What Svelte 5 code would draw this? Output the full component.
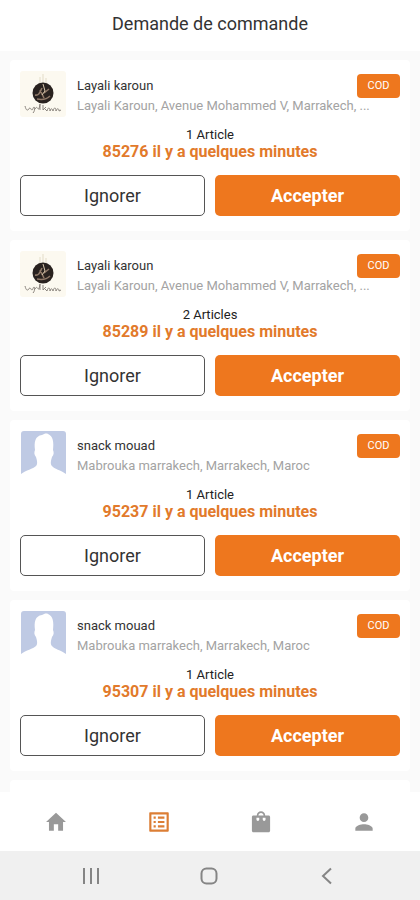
<script>
  const orders = [
    { id: 85276, shop: 'Layali karoun', address: 'Layali Karoun, Avenue Mohammed V, Marrakech, ...', count: 1, logo: true },
    { id: 85289, shop: 'Layali karoun', address: 'Layali Karoun, Avenue Mohammed V, Marrakech, ...', count: 2, logo: true },
    { id: 95237, shop: 'snack mouad', address: 'Mabrouka marrakech, Marrakech, Maroc', count: 1, logo: false },
    { id: 95307, shop: 'snack mouad', address: 'Mabrouka marrakech, Marrakech, Maroc', count: 1, logo: false }
  ]

  // material icons, 24x24
  const tabs = [
    { name: 'home', label: 'Accueil', path: 'M10 20v-6h4v6h4.500v-8h2.700L12 3.500 2.800 12h2.700v8z' },
    { name: 'orders', label: 'Commandes', path: 'M19 5v14H5V5h14m1.100-2H3.900c-.5 0-.9.4-.9.9v16.200c0 .4.4.9.9.9h16.200c.4 0 .9-.5.9-.9V3.900c0-.5-.5-.9-.9-.9zM11 7h6v2h-6V7zm0 4h6v2h-6v-2zm0 4h6v2h-6zM7 7h2v2H7zm0 4h2v2H7zm0 4h2v2H7z' },
    { name: 'products', label: 'Produits', path: 'M19 6h-3.100a3.900 3.900 0 0 0-7.800 0H5c-.8 0-1.400.6-1.400 1.400v12.700c0 .8.6 1.400 1.400 1.400h14c.8 0 1.400-.6 1.400-1.400V7.400c0-.8-.6-1.400-1.400-1.400zM12 3.600c1.300 0 2.300 1 2.400 2.400H9.600c.1-1.400 1.100-2.400 2.400-2.400zM9.100 11a1.300 1.300 0 0 1-1.300-1.300V8h2.600v1.700c0 .7-.6 1.300-1.300 1.300zm5.800 0a1.300 1.300 0 0 1-1.300-1.300V8h2.600v1.700c0 .7-.6 1.300-1.300 1.300z' },
    { name: 'profile', label: 'Profil', path: 'M12 12c2.210 0 4-1.790 4-4s-1.790-4-4-4-4 1.790-4 4 1.790 4 4 4zm0 2c-2.670 0-8 1.340-8 4v2h16v-2c0-2.660-5.330-4-8-4z' }
  ]

  let active = $state('orders')
</script>

<div class="app">
  <header>
    <h1>Demande de commande</h1>
  </header>

  <main>
    {#each orders as order (order.id)}
      <article class="card">
        <div class="shop">
          {#if order.logo}
            <svg class="avatar" viewBox="0 0 46 46" aria-hidden="true">
              <rect width="46" height="46" rx="3" fill="#fcf9f0" />
              <path d="M20 12V6M23 12V3M26 12V7" stroke="#e3dcc8" stroke-width="1" />
              <circle cx="23" cy="22" r="10.500" fill="#29221f" />
              <path d="M15 24c4 1 5-3 7-7M17 28c5 1 10 0 13-3M24 22l5-4M20 19l4 8" fill="none" stroke="#8f7867" stroke-width="1.600" />
              <path d="M23 13l2 7-3 4" fill="none" stroke="#d9c8ad" stroke-width="1" />
              <path d="M5 35c1 4 2 5 4 3 1-3 2 1 3 1s1-3 2-3 1 4-1 6M15 38c2-4 3 1 4 0l1-5v6M23 34v5l3-3M24 37l3 3c1-4 3-4 3 0 1-3 2-3 3 0 1-4 3-4 3 0 1-3 3-3 3 0l2-1" fill="none" stroke="#8b857e" stroke-width="1" />
            </svg>
          {:else}
            <svg class="avatar" viewBox="0 0 46 46" aria-hidden="true">
              <path d="M3 0h40q3 0 3 3v40c-5-4-12-5-14-8-2-2-1-6 0-9 2-2 2-5 1-7 1-8 0-14-5-16-2-1-4 0-6 1-7 1-8 7-7 15-1 2-1 5 1 7 1 3 2 7 0 9-3 3-10 4-15 8V3q0-3 3-3z" fill="#bfcae4" />
            </svg>
          {/if}
          <div class="info">
            <div class="name">
              <h2>{order.shop}</h2>
              <span class="badge">COD</span>
            </div>
            <p class="address">{order.address}</p>
          </div>
        </div>

        <div class="summary">
          <div>{order.count} {order.count > 1 ? 'Articles' : 'Article'}</div>
          <strong>{order.id} il y a quelques minutes</strong>
        </div>

        <div class="actions">
          <button class="ignore">Ignorer</button>
          <button class="accept">Accepter</button>
        </div>
      </article>
    {/each}
    <article class="card"></article>
  </main>

  <nav class="tabs">
    {#each tabs as tab (tab.name)}
      <button class:active={active === tab.name} aria-label={tab.label} onclick={() => active = tab.name}>
        <svg viewBox="0 0 24 24"><path d={tab.path} /></svg>
      </button>
    {/each}
  </nav>

  <nav class="system">
    <button aria-label="Applications récentes">
      <svg viewBox="0 0 24 24"><path d="M5 4v16M12 4v16M19 4v16" /></svg>
    </button>
    <button aria-label="Écran d'accueil">
      <svg viewBox="0 0 24 24"><rect x="4.500" y="4.500" width="15" height="15" rx="5" /></svg>
    </button>
    <button aria-label="Retour">
      <svg viewBox="0 0 24 24"><path d="M16 4.500L8 12l8 7.500" /></svg>
    </button>
  </nav>
</div>

<style>
.app {
  display: flex;
  flex-direction: column;
  height: 100vh;
  background: #fff;
  color: #333;
  font-family: Roboto, 'Liberation Sans', sans-serif;
}

header {
  flex: none;
  padding: 12px 0 15px;
}

h1, h2, p {
  margin: 0;
  font-weight: 400;
}

h1 {
  font-size: 18px;
  line-height: 24px;
  text-align: center;
}

main {
  flex: 1;
  min-height: 0;
  overflow: hidden;
  display: flex;
  flex-direction: column;
  gap: 9px;
  padding: 9px 10px 0;
  background: #fafafa;
}

.card {
  flex: none;
  padding: 11px 10px 15px;
  border-radius: 4px;
  background: #fff;
}

.shop {
  display: flex;
  gap: 11px;
}

.avatar {
  flex: none;
  width: 46px;
  height: 46px;
}

.info {
  flex: 1;
  min-width: 0;
  padding-top: 3px;
}

.name {
  display: flex;
  justify-content: space-between;
  align-items: center;
}

h2 {
  font-size: 13px;
  line-height: 24px;
}

.badge {
  width: 43px;
  border-radius: 4px;
  background: #ee771e;
  color: #fff;
  font-size: 11px;
  line-height: 24px;
  text-align: center;
}

.address {
  overflow: hidden;
  color: #a3a3a3;
  font-size: 13px;
  line-height: 15px;
  white-space: nowrap;
}

.summary {
  margin: 9px 0 15px;
  color: #222;
  font-size: 13px;
  line-height: 17px;
  text-align: center;
}

.summary strong {
  display: block;
  color: #e27a2b;
  font-size: 16px;
  font-weight: 700;
}

.actions {
  display: grid;
  grid-template-columns: 1fr 1fr;
  gap: 10px;
}

button {
  padding: 0;
  border: 0;
  background: none;
  font-family: inherit;
  cursor: pointer;
}

.actions button {
  height: 41px;
  border-radius: 5px;
  font-size: 18px;
}

.ignore {
  border: 1px solid #555;
  color: #333;
}

.actions .accept {
  background: #ee771e;
  color: #fff;
  font-weight: 700;
}

.tabs,
.system {
  flex: none;
  display: flex;
}

.tabs {
  height: 59px;
  padding: 0 5px;
}

.system {
  height: 49px;
  padding: 0 34px 0 32px;
  background: #f0f0f0;
}

nav button {
  flex: 1;
  display: flex;
  justify-content: center;
  align-items: center;
}

.tabs svg {
  width: 26px;
  height: 26px;
  fill: #999;
}

.tabs .active svg {
  fill: #dc7e35;
}

.system svg {
  width: 24px;
  height: 24px;
  fill: none;
  stroke: #858585;
  stroke-width: 2;
}
</style>
